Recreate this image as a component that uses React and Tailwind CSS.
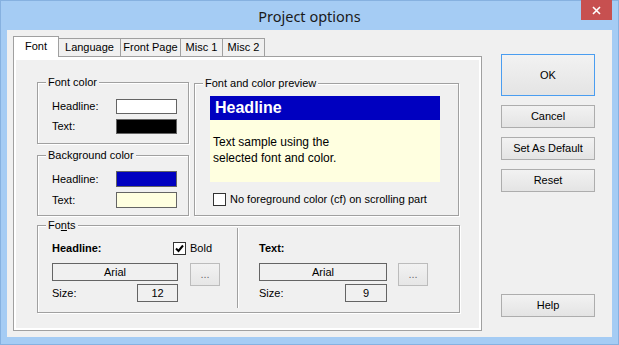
import React from 'react'

const ui = "font-['Liberation_Sans',Arial,sans-serif] text-[11px] text-black leading-none"

function Group({ label, className, children }) {
  return (
    <div className={`relative border border-[#a0a0a0] shadow-[1px_1px_0_#fff,inset_1px_1px_0_#fff] ${className}`}>
      <span className="absolute left-[8px] top-[-7px] bg-[#f0f0f0] px-[2px] leading-[13px]">{label}</span>
      {children}
    </div>
  )
}

function WinButton({ children, className = '', focused = false }) {
  return (
    <div
      className={`flex items-center justify-center w-[94px] border bg-gradient-to-b from-[#f2f2f2] to-[#e4e4e4] ${
        focused ? 'border-[#4a9df0]' : 'border-[#adadad]'
      } ${className}`}
    >
      {children}
    </div>
  )
}

function Check({ checked }) {
  return (
    <div className="w-[13px] h-[13px] border border-[#333] bg-white flex items-center justify-center shrink-0">
      {checked && (
        <svg width="9" height="9" viewBox="0 0 9 9">
          <path d="M1 4.5 L3.5 7 L8 1.5" stroke="#000" strokeWidth="2" fill="none" />
        </svg>
      )}
    </div>
  )
}

function Field({ children, className = '' }) {
  return (
    <div className={`flex items-center justify-center h-[18px] border border-[#646464] bg-[#f0f0f0] ${className}`}>
      {children}
    </div>
  )
}

function Dots({ className = '' }) {
  return (
    <div className={`w-[30px] h-[23px] border border-[#bcbcbc] bg-gradient-to-b from-[#f2f2f2] to-[#e6e6e6] flex items-end justify-center pb-[5px] text-[#6d6d6d] ${className}`}>
      ...
    </div>
  )
}

export default function App() {
  const tabs = [
    ['Language', 'w-[62px]'],
    ['Front Page', 'w-[60px]'],
    ['Misc 1', 'w-[42px]'],
    ['Misc 2', 'w-[42px]'],
  ]

  return (
    <div className={`w-[619px] h-[345px] bg-[#a5ccf4] border border-[#86b1e0] flex flex-col ${ui}`}>
      {/* Title bar */}
      <div className="relative h-[29px] flex items-center justify-center">
        <span className="font-['Noto_Sans',sans-serif] text-[14.5px] text-[#1a1a1a] pt-[1px]">Project options</span>
        <div className="absolute right-[6px] top-[-1px] w-[31px] h-[20px] bg-[#c75050] flex items-center justify-center">
          <svg width="9" height="9" viewBox="0 0 9 9">
            <path d="M1 1 L8 8 M8 1 L1 8" stroke="#fff" strokeWidth="1.6" />
          </svg>
        </div>
      </div>

      {/* Client area */}
      <div className="mx-[6px] h-[307px] bg-[#f0f0f0] flex pt-[6px] pl-[6px]">
        {/* Tab control */}
        <div className="w-[469px]">
          <div className="flex items-end h-[20px]">
            <div className="relative z-10 w-[46px] h-[21px] -mb-px bg-white border-l border-t border-r border-[#a0a0a0] flex items-center justify-center pb-[2px]">
              Font
            </div>
            {tabs.map(([t, w]) => (
              <div
                key={t}
                className={`${w} h-[18px] border-t border-r border-[#a0a0a0] bg-[#f0f0f0] flex items-center justify-center`}
              >
                {t}
              </div>
            ))}
          </div>
          <div className="h-[275px] border border-[#a0a0a0] bg-white pt-[3px] px-[2px] pb-[2px]">
            <div className="h-full bg-[#f0f0f0] pl-[21px] pt-[22px]">
              <div className="flex items-start">
                <div className="w-[152px]">
                  <Group label="Font color" className="h-[62px] pl-[14px] pt-[16px]">
                    <div className="flex flex-col gap-[5px]">
                      <div className="flex items-center">
                        <span className="w-[64px]">Headline:</span>
                        <div className="w-[61px] h-[15px] border border-[#646464] bg-white" />
                      </div>
                      <div className="flex items-center">
                        <span className="w-[64px]">Text:</span>
                        <div className="w-[61px] h-[15px] border border-[#646464] bg-black" />
                      </div>
                    </div>
                  </Group>
                  <Group label="Background color" className="mt-[11px] h-[61px] pl-[14px] pt-[15px]">
                    <div className="flex flex-col gap-[5px]">
                      <div className="flex items-center">
                        <span className="w-[64px]">Headline:</span>
                        <div className="w-[61px] h-[16px] border border-[#646464] bg-[#0000c0]" />
                      </div>
                      <div className="flex items-center">
                        <span className="w-[64px]">Text:</span>
                        <div className="w-[61px] h-[16px] border border-[#646464] bg-[#ffffe0]" />
                      </div>
                    </div>
                  </Group>
                </div>
                <Group label="Font and color preview" className="ml-[5px] mt-px w-[265px] h-[133px] pl-[15px] pt-[12px]">
                  <div className="w-[230px]">
                    <div className="h-[24px] bg-[#0000c0] text-white font-['Liberation_Sans',Arial,sans-serif] font-bold text-[16px] pl-[5px] flex items-center">
                      Headline
                    </div>
                    <div className="h-[62px] bg-[#ffffe0] pl-[3px] pt-[14px] text-[12px] leading-[16px]">
                      Text sample using the
                      <br />
                      selected font and color.
                    </div>
                  </div>
                  <div className="flex items-center mt-[11px] ml-[3px] gap-[4px]">
                    <Check />
                    <span>No foreground color (cf) on scrolling part</span>
                  </div>
                </Group>
              </div>

              <Group
                label={
                  <>
                    Fo<span className="underline">n</span>ts
                  </>
                }
                className="mt-[9px] w-[423px] h-[88px] flex"
              >
                <div className="pl-[14px] pt-[16px] w-[182px] shrink-0">
                  <div className="flex items-center h-[13px]">
                    <span className="w-[121px] font-bold">Headline:</span>
                    <Check checked />
                    <span className="ml-[4px]">Bold</span>
                  </div>
                  <div className="flex items-start mt-[8px]">
                    <div className="w-[126px]">
                      <Field>Arial</Field>
                      <div className="flex items-center justify-between mt-[3px]">
                        <span>Size:</span>
                        <Field className="w-[41px]">12</Field>
                      </div>
                    </div>
                    <Dots className="ml-[12px]" />
                  </div>
                </div>
                <div className="ml-[17px] mt-[2px] mb-[4px] w-[2px] border-l border-[#a0a0a0] border-r border-r-white" />
                <div className="ml-[20px] pt-[16px]">
                  <div className="flex items-center h-[13px]">
                    <span className="font-bold">Text:</span>
                  </div>
                  <div className="flex items-start mt-[8px]">
                    <div className="w-[128px]">
                      <Field>Arial</Field>
                      <div className="flex items-center justify-between mt-[3px]">
                        <span>Size:</span>
                        <Field className="w-[42px]">9</Field>
                      </div>
                    </div>
                    <Dots className="ml-[11px]" />
                  </div>
                </div>
              </Group>
            </div>
          </div>
        </div>

        {/* Buttons */}
        <div className="ml-[19px] mt-[18px] flex flex-col">
          <WinButton focused className="h-[42px]">OK</WinButton>
          <WinButton className="h-[23px] mt-[9px]">Cancel</WinButton>
          <WinButton className="h-[23px] mt-[9px]">Set As Default</WinButton>
          <WinButton className="h-[23px] mt-[9px]">Reset</WinButton>
          <WinButton className="h-[23px] mt-[102px]">Help</WinButton>
        </div>
      </div>
    </div>
  )
}
